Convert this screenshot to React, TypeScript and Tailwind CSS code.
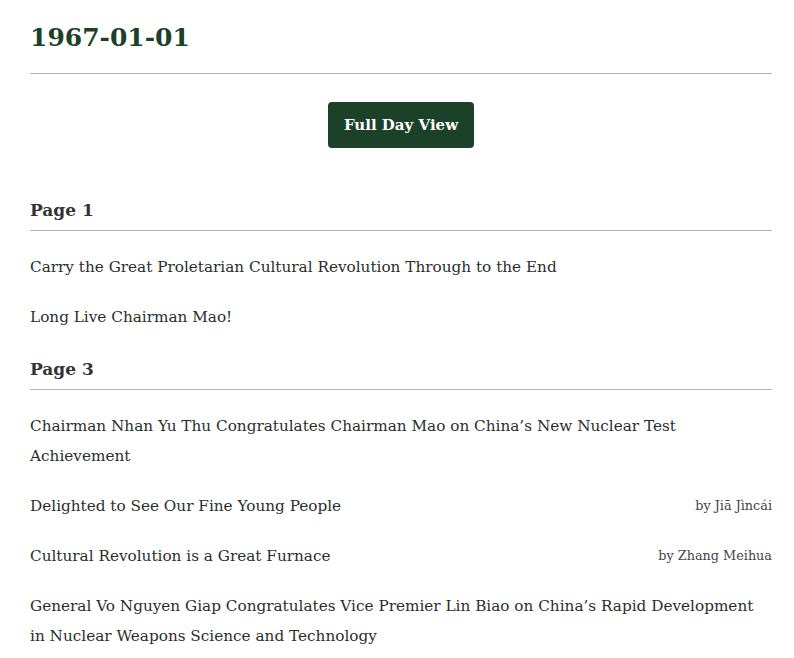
import React from "react";

type Item = { title: string; by?: string };
type Section = { page: string; items: Item[] };

const sections: Section[] = [
  {
    page: "Page 1",
    items: [
      { title: "Carry the Great Proletarian Cultural Revolution Through to the End" },
      { title: "Long Live Chairman Mao!" },
    ],
  },
  {
    page: "Page 3",
    items: [
      { title: "Chairman Nhan Yu Thu Congratulates Chairman Mao on China\u2019s New Nuclear Test Achievement" },
      { title: "Delighted to See Our Fine Young People", by: "by Jiā Jìncái" },
      { title: "Cultural Revolution is a Great Furnace", by: "by Zhang Meihua" },
      { title: "General Vo Nguyen Giap Congratulates Vice Premier Lin Biao on China\u2019s Rapid Development in Nuclear Weapons Science and Technology" },
    ],
  },
];

export default function App() {
  return (
    <div
      className="bg-white min-h-screen pl-[30px] pr-[22px] pt-[20px] text-[#2a2f2b]"
      style={{ fontFamily: '"DejaVu Serif", "Liberation Serif", serif' }}
    >
      <h1 className="text-[25px] font-bold leading-[36px] text-[#1b4229] pb-[17px] border-b border-[#a9b5b0]">
        1967-01-01
      </h1>
      <div className="flex justify-center pt-[28px]">
        <button className="h-[46px] w-[146px] rounded-[4px] bg-[#1b4229] text-white font-bold text-[15px]">
          Full Day View
        </button>
      </div>
      <div className="pt-[48px]">
        {sections.map((s, si) => (
          <div key={si} className={si > 0 ? "pt-[3px]" : ""}>
            <h2 className="text-[17px] font-bold leading-[28px] text-[#333] pb-[6px] border-b border-[#a9b5b0] mb-[21px]">
              {s.page}
            </h2>
            {s.items.map((it, ii) => (
              <div key={ii} className="flex items-center justify-between gap-4 mb-[20px]">
                <span className="block text-[15.25px] leading-[30px]">{it.title}</span>
                {it.by && (
                  <span className="block text-[12.8px] leading-[30px] text-[#444] whitespace-nowrap">{it.by}</span>
                )}
              </div>
            ))}
          </div>
        ))}
      </div>
    </div>
  );
}
